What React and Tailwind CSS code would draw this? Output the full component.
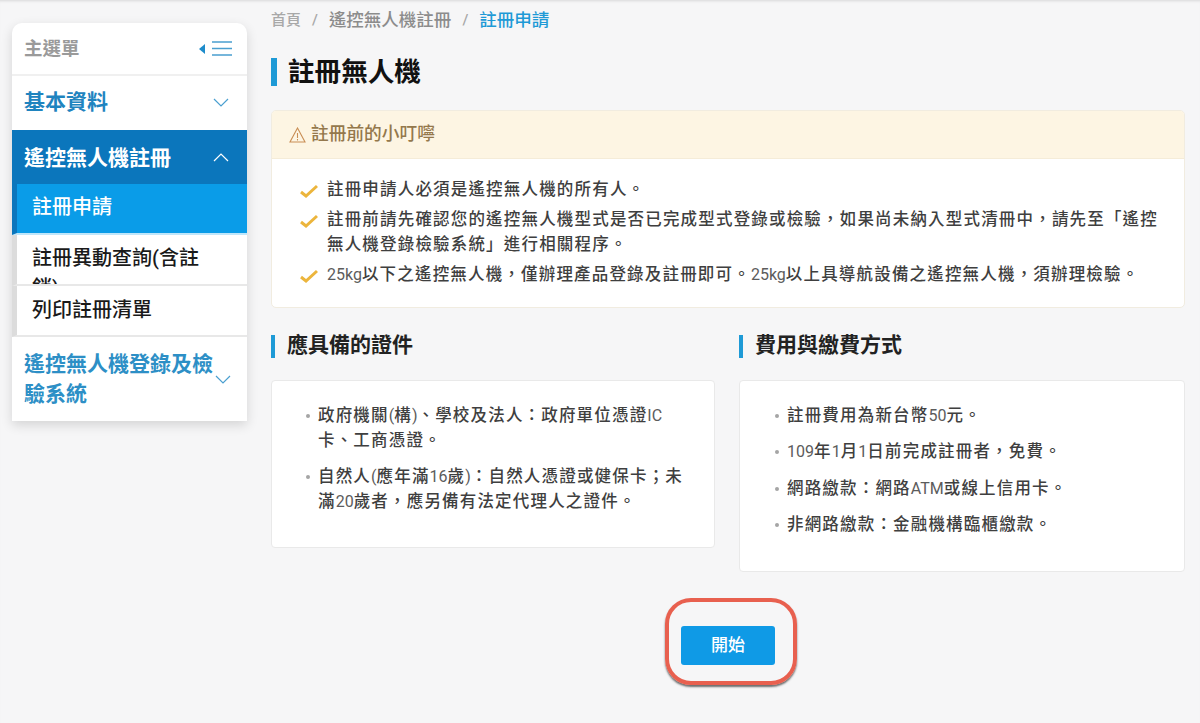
import React from "react";

const font = { fontFamily: '"Roboto","Noto Sans CJK TC","Noto Sans",sans-serif' };

function Chevron({ up, color = "#4a9fd0" }) {
  return (
    <svg width="16" height="9" viewBox="0 0 16 9" fill="none" stroke={color} strokeWidth="1.2">
      <path d={up ? "M1 8 L8 1 L15 8" : "M1 1 L8 8 L15 1"} />
    </svg>
  );
}

function Check() {
  return (
    <svg width="18" height="14" viewBox="0 0 18 14" fill="none" stroke="#ecb53c" strokeWidth="3" className="shrink-0 mt-[7px]">
      <path d="M1 8 L6 12 L17 2" />
    </svg>
  );
}

function CheckItem({ children }) {
  return (
    <li className="flex gap-[9px]">
      <Check />
      <span>{children}</span>
    </li>
  );
}

function Dot({ children }) {
  return (
    <li className="flex gap-[8px]">
      <span className="mt-[11px] w-[4px] h-[4px] rounded-full bg-[#a5a5a5] shrink-0" />
      <span>{children}</span>
    </li>
  );
}

function L({ children }) {
  return <span className="text-[16px] font-normal tracking-normal text-[#5c5c5c]">{children}</span>;
}

function SectionHead({ children }) {
  return (
    <div className="flex items-center gap-[12px] h-[23px]">
      <span className="w-[4px] h-[23px] bg-[#1e9ad6]" />
      <h3 className="text-[21px] leading-[21px] pb-[2px] font-bold text-[#222]">{children}</h3>
    </div>
  );
}

export default function App() {
  return (
    <div style={font} className="relative flex h-[723px] w-[1200px] overflow-hidden bg-[#f6f6f7] shadow-[inset_0_3px_3px_-2px_rgba(0,0,0,0.12)]">
      <aside className="ml-3 mt-[23px] w-[235px] h-[398px] shrink-0 bg-white rounded-t-[10px] shadow-[0_4px_12px_rgba(0,0,0,0.14)] flex flex-col">
        <div className="h-[53px] shrink-0 border-b-2 border-[#f0f0f0] flex items-center justify-between pl-[12px] pr-[15px]">
          <span className="text-[18.5px] font-bold text-[#9a9a9a] pt-[2px]">主選單</span>
          <span className="flex items-center gap-[7px]">
            <svg width="6" height="10" viewBox="0 0 6 10"><path d="M6 0 V10 L0 5 Z" fill="#1e8ccb" /></svg>
            <svg width="20" height="15" viewBox="0 0 20 15" stroke="#4a9fd0" strokeWidth="1.5"><path d="M0 1 H20 M0 7.5 H20 M0 14 H20" /></svg>
          </span>
        </div>
        <div className="h-[54px] shrink-0 flex items-center justify-between pl-3 pr-[18px] text-[21px] font-bold text-[#1f84bf]">
          <span>基本資料</span>
          <span className="-mt-[2px]"><Chevron /></span>
        </div>
        <div className="h-[54px] shrink-0 flex items-center justify-between pl-3 pr-[18px] text-[21px] font-bold text-white bg-[#0b76bc]">
          <span className="pt-[3px]">遙控無人機註冊</span>
          <Chevron up color="#ffffff" />
        </div>
        <div className="h-[51px] shrink-0 border-l-[5px] border-[#0b76bc] border-b-2 border-b-[#bfe6fa] bg-[#0a9ce8] flex items-center pl-[15px] pb-[3px] text-[20px] font-medium text-white">
          註冊申請
        </div>
        <div className="h-[51px] shrink-0 border-l-[5px] border-l-[#dcdcdc] border-b-2 border-b-[#e8e8e8] overflow-hidden pl-[15px] pr-[28px] pt-[8px] text-[20px] leading-[30px] font-medium text-[#1a1a1a]">
          註冊異動查詢(含註銷)
        </div>
        <div className="h-[51px] shrink-0 border-l-[5px] border-l-[#dcdcdc] border-b-2 border-b-[#e8e8e8] flex items-center pl-[15px] pb-[2px] text-[20px] font-medium text-[#1a1a1a]">
          列印註冊清單
        </div>
        <div className="flex-1 flex items-center justify-between pl-3 pr-[18px] text-[21px] leading-[30px] font-bold text-[#2d8fc6]">
          <span className="w-[195px] shrink-0">遙控無人機登錄及檢驗系統</span>
          <span className="-ml-1 -mr-[1px] mt-[1px]"><Chevron /></span>
        </div>
      </aside>

      <main className="ml-6 w-[914px] shrink-0">
        <nav className="h-[40px] flex items-center gap-[11px] text-[17.5px] font-medium">
          <span className="text-[15px] text-[#a8a8a8]">首頁</span>
          <span className="text-[15px] text-[#a8a8a8]">/</span>
          <span className="text-[#8c8c8c]">遙控無人機註冊</span>
          <span className="text-[15px] text-[#a8a8a8]">/</span>
          <span className="text-[#1e9ad6]">註冊申請</span>
        </nav>

        <div className="mt-[18px] flex items-center gap-[11px] h-[28px]">
          <span className="w-[6px] h-[28px] bg-[#1e9ad6]" />
          <h1 className="text-[26.6px] leading-[27px] pb-[2px] font-bold text-[#111]">註冊無人機</h1>
        </div>

        <section className="mt-[24px] h-[198px] rounded-[5px] border border-[#f1ece0] bg-white overflow-hidden">
          <div className="h-[48px] bg-[#fdf5e3] border-b border-[#f5ecd8] flex items-center gap-[5px] pl-[17px] text-[17.7px] font-medium text-[#94784c]">
            <svg width="17" height="16" viewBox="0 0 17 16" fill="none" stroke="#c98e55" strokeWidth="1.1">
              <path d="M8.5 1 L16 15 H1 Z M8.5 6 V11 M8.5 12 V13.5" />
            </svg>
            <span>註冊前的小叮嚀</span>
          </div>
          <ul className="pt-[18px] pl-[28px] pr-[22px] flex flex-col gap-[5px] text-[16.5px] leading-[25px] tracking-[1.18px] font-medium text-[#3f3f3f]">
            <CheckItem>註冊申請人必須是遙控無人機的所有人。</CheckItem>
            <CheckItem>註冊前請先確認您的遙控無人機型式是否已完成型式登錄或檢驗，如果尚未納入型式清冊中，請先至「遙控無人機登錄檢驗系統」進行相關程序。</CheckItem>
            <CheckItem><L>25kg</L>以下之遙控無人機，僅辦理產品登錄及註冊即可。<L>25kg</L>以上具導航設備之遙控無人機，須辦理檢驗。</CheckItem>
          </ul>
        </section>

        <div className="mt-[27px] grid grid-cols-[444px_446px] gap-x-[24px] items-start">
          <div>
            <SectionHead>應具備的證件</SectionHead>
            <ul className="mt-[22px] h-[168px] rounded-[4px] border border-[#e9e9e9] bg-white pt-[22px] pl-[34px] pr-[24px] flex flex-col gap-[11px] text-[16.5px] leading-[25px] tracking-[1.18px] font-medium text-[#3f3f3f]">
              <Dot>政府機關<L>(</L>構<L>)</L>、學校及法人：政府單位憑證<L>IC</L><br />卡、工商憑證。</Dot>
              <Dot>自然人<L>(</L>應年滿<L>16</L>歲<L>)</L>：自然人憑證或健保卡；未滿<L>20</L>歲者，應另備有法定代理人之證件。</Dot>
            </ul>
          </div>
          <div>
            <SectionHead>費用與繳費方式</SectionHead>
            <ul className="mt-[22px] h-[192px] rounded-[4px] border border-[#e9e9e9] bg-white pt-[22px] pl-[35px] pr-[24px] flex flex-col gap-[11.4px] text-[16.5px] leading-[25px] tracking-[1.18px] font-medium text-[#3f3f3f]">
              <Dot>註冊費用為新台幣<L>50</L>元。</Dot>
              <Dot><L>109</L>年<L>1</L>月<L>1</L>日前完成註冊者，免費。</Dot>
              <Dot>網路繳款：網路<L>ATM</L>或線上信用卡。</Dot>
              <Dot>非網路繳款：金融機構臨櫃繳款。</Dot>
            </ul>
          </div>
        </div>
      </main>

      <button className="absolute left-[681px] top-[626px] w-[94px] h-[39px] rounded-[3px] bg-[#0f9ae6] text-white text-[17px] font-medium">
        開始
        <span className="absolute -left-[16px] -top-[28px] w-[132px] h-[87px] rounded-[26px] border-[4px] border-[#e8604f] shadow-[0_2px_2px_rgba(50,50,50,0.7)]" />
      </button>
    </div>
  );
}
